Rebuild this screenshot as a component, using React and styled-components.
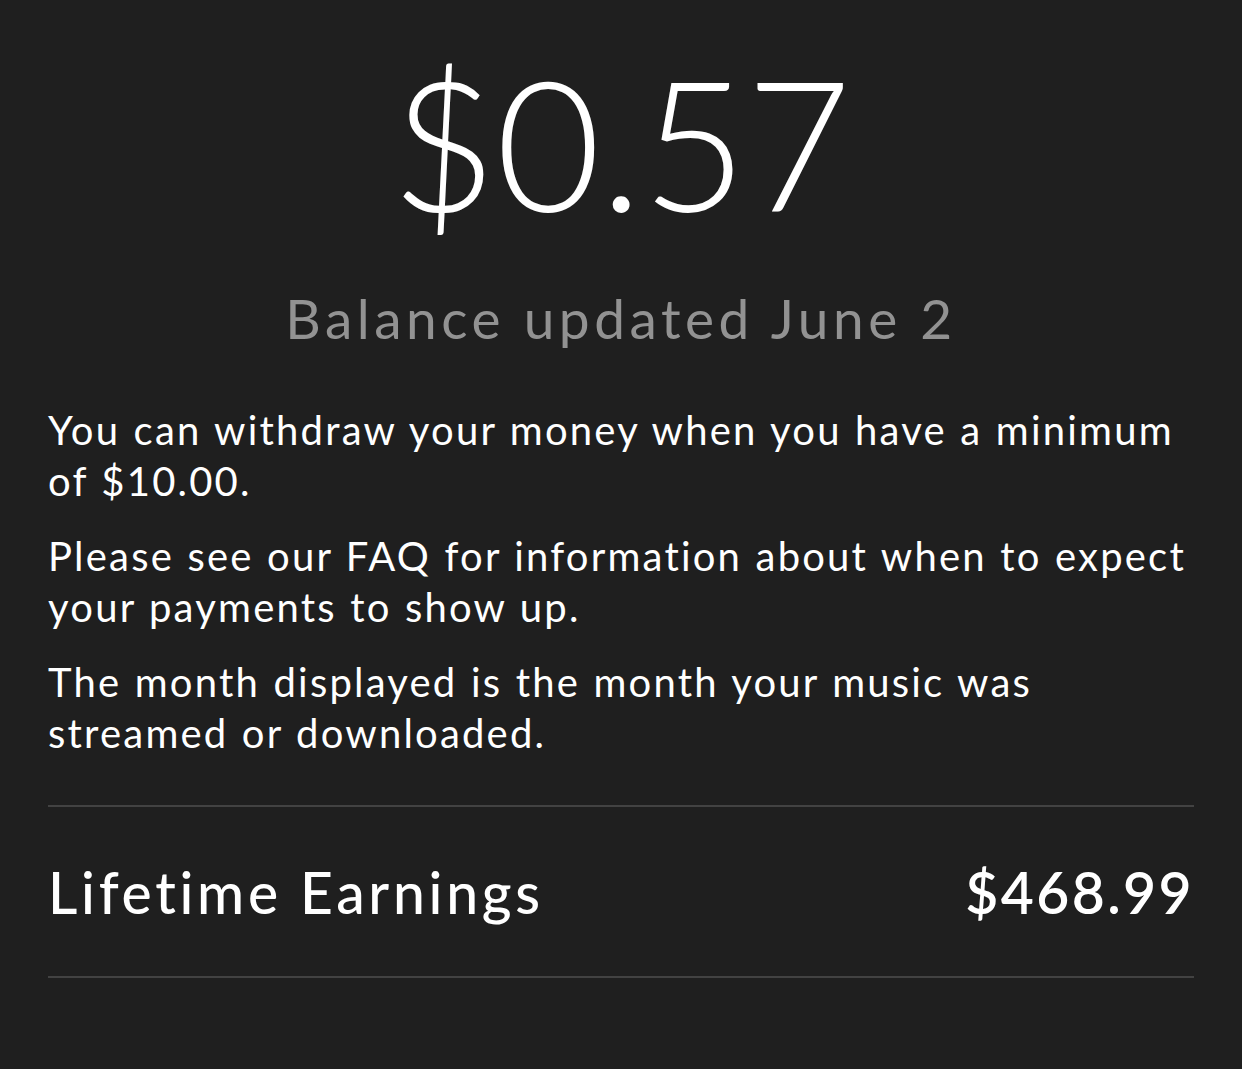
import React from 'react'
import styled, { createGlobalStyle } from 'styled-components'

const GlobalStyle = createGlobalStyle`
    html, body {
        margin: 0;
        padding: 0;
        background: #1f1f1f;
    }
    body {
        font-family: Lato, "Noto Sans", sans-serif;
        color: #fff;
        -webkit-font-smoothing: antialiased;
    }
`

const Page = styled.main`
    min-height: 1069px;
    padding: 52px 48px 0;
    box-sizing: border-box;
    background: #1f1f1f;
`

const Balance = styled.section`
    display: flex;
    flex-direction: column;
    align-items: center;
`

const Amount = styled.h1`
    margin: 0;
    font-size: 181px;
    font-weight: 300;
    line-height: 1;
    letter-spacing: -0.5px;
`

const Updated = styled.p`
    margin: 52px 0 0;
    font-size: 55px;
    line-height: 1.2;
    letter-spacing: 4.5px;
    color: #929292;
`

const Info = styled.div`
    margin-top: 54px;
    display: flex;
    flex-direction: column;
    gap: 24px;
`

const Paragraph = styled.p`
    margin: 0;
    font-size: 40px;
    line-height: 51px;
    letter-spacing: 2.2px;
    word-spacing: 1px;
`

const Row = styled.div`
    margin-top: 46px;
    height: 169px;
    display: flex;
    align-items: center;
    justify-content: space-between;
    border-top: 2px solid #424242;
    border-bottom: 2px solid #424242;
`

const Label = styled.span`
    font-size: 57px;
    font-weight: 500;
    letter-spacing: 3.7px;
`

const Total = styled.span`
    font-size: 57px;
    font-weight: 600;
    letter-spacing: 2.4px;
`

const App = () => {
    return (
        <Page>
            <GlobalStyle />
            <Balance>
                <Amount>$0.57</Amount>
                <Updated>Balance updated June 2</Updated>
            </Balance>
            <Info>
                <Paragraph>You can withdraw your money when you have a minimum of $10.00.</Paragraph>
                <Paragraph>Please see our FAQ for information about when to expect your payments to show up.</Paragraph>
                <Paragraph>The month displayed is the month your music was streamed or downloaded.</Paragraph>
            </Info>
            <Row>
                <Label>Lifetime Earnings</Label>
                <Total>$468.99</Total>
            </Row>
        </Page>
    )
}

export default App
